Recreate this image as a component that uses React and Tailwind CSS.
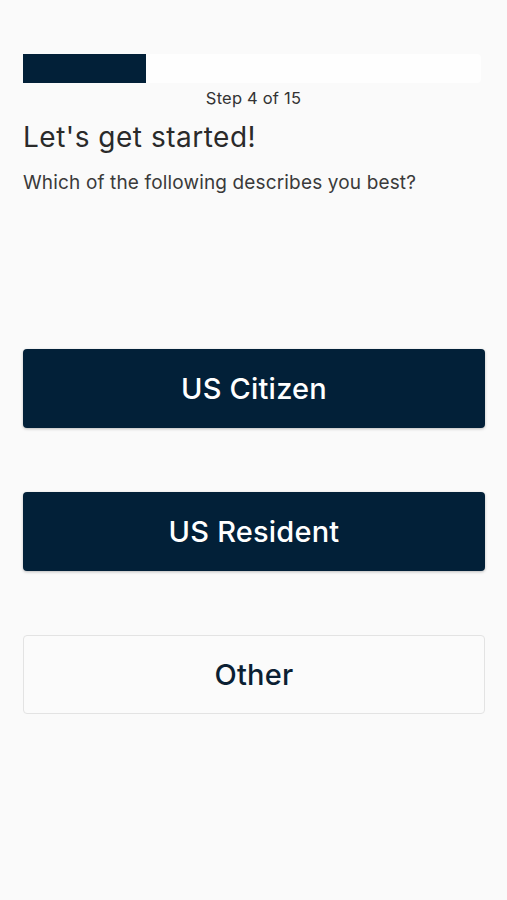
export default function App() {
  const font = { fontFamily: 'Inter, "Noto Sans", sans-serif' };
  return (
    <div className="min-h-[900px] w-[507px] bg-[#fafafa] text-[#333]" style={font}>
      <div className="h-[54px]" />
      <div className="px-[23px]">
        <div className="flex h-[29px] w-[458px] overflow-hidden rounded-r-[4px] bg-[#fefefe]">
          <div className="h-full w-[123px] bg-[#022038]" />
        </div>
        <div className="mt-[4px] text-center text-[16.5px] leading-[22px] tracking-[0.2px] text-[#333]">Step 4 of 15</div>
        <div className="mt-[11px] text-[28px] leading-[34px] tracking-[0.5px] text-[#2a2a2a]">Let's get started!</div>
        <div className="mt-[17px] text-[19px] leading-[24px] tracking-[0.15px] text-[#3a3a3a]">Which of the following describes you best?</div>
        <div className="mt-[154px] flex flex-col gap-[64px]">
          <button className="flex h-[79px] w-[462px] items-center justify-center rounded-[4px] bg-[#022038] text-[29px] font-medium tracking-[0.2px] text-white shadow-[0_1px_3px_rgba(0,0,0,0.25)]">
            US Citizen
          </button>
          <button className="flex h-[79px] w-[462px] items-center justify-center rounded-[4px] bg-[#022038] text-[29px] font-medium tracking-[0.2px] text-white shadow-[0_1px_3px_rgba(0,0,0,0.25)]">
            US Resident
          </button>
          <button className="flex h-[79px] w-[462px] items-center justify-center rounded-[4px] border border-[#e3e3e3] bg-[#fbfbfb] text-[29px] font-medium tracking-[0.2px] text-[#0b1f33]">
            Other
          </button>
        </div>
      </div>
    </div>
  );
}
